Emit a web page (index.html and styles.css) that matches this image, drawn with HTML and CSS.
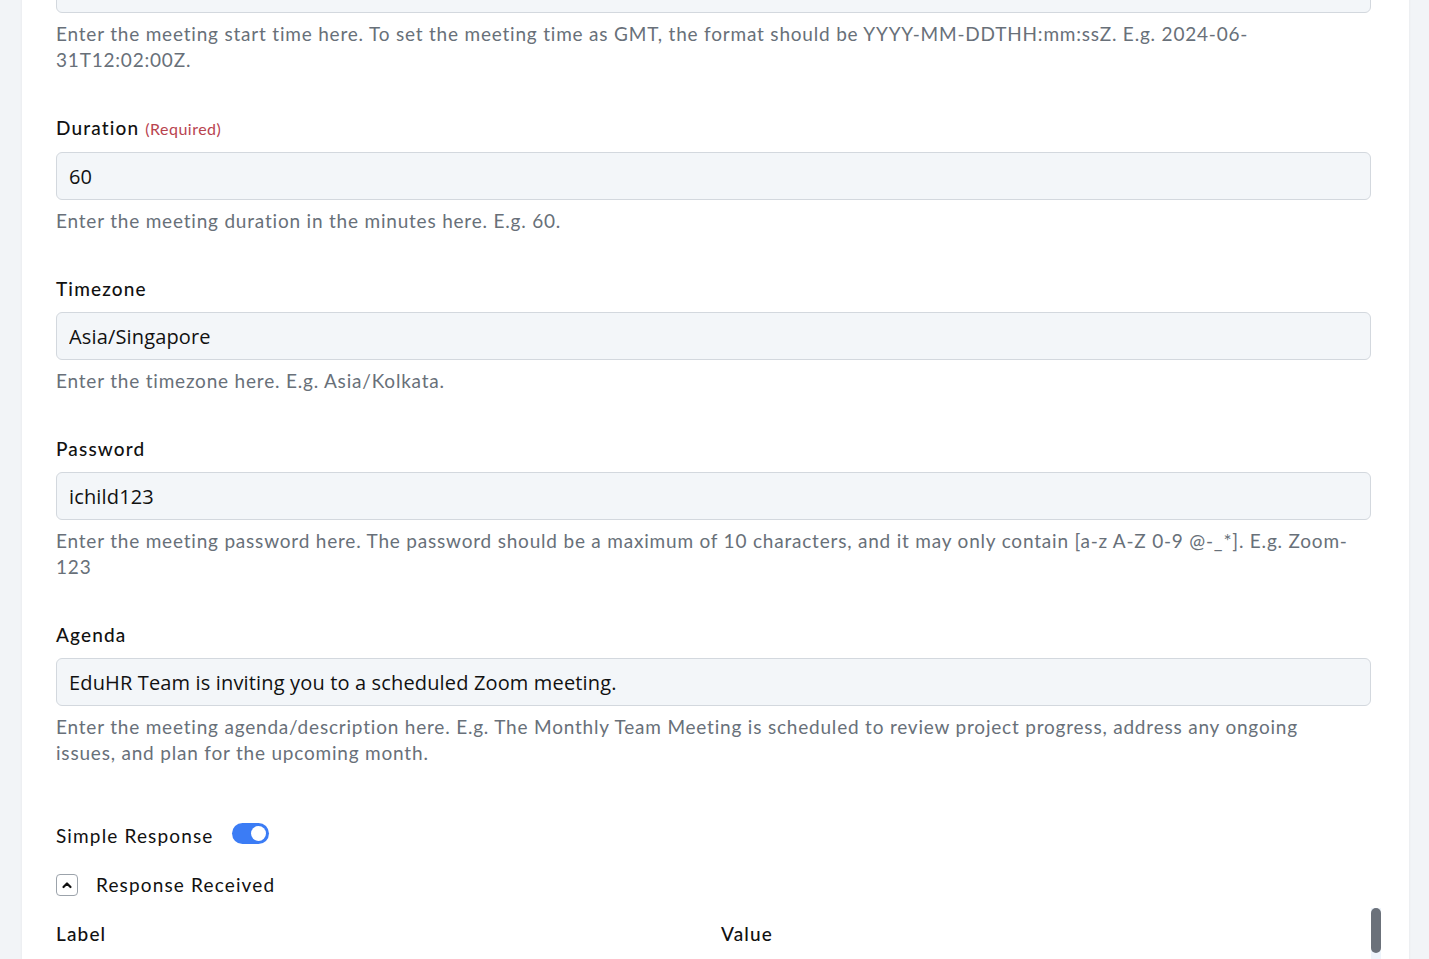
FILE: index.html
```html
<!DOCTYPE html>
<html lang="en">
<head>
  <meta charset="UTF-8">
  <meta name="viewport" content="width=device-width, initial-scale=1.0">
  <title>Zoom Meeting Settings</title>
  <link rel="stylesheet" href="styles.css">
</head>
<body>
  <div class="card">
    <div class="field first">
      <input class="text-input" type="text" value="2024-06-31T12:02:00">
      <p class="help">Enter the meeting start time here. To set the meeting time as GMT, the format should be YYYY-MM-DDTHH:mm:ssZ. E.g. 2024-06-31T12:02:00Z.</p>
    </div>

    <div class="field">
      <label class="label">Duration <span class="required">(Required)</span></label>
      <input class="text-input" type="text" value="60">
      <p class="help">Enter the meeting duration in the minutes here. E.g. 60.</p>
    </div>

    <div class="field">
      <label class="label">Timezone</label>
      <input class="text-input" type="text" value="Asia/Singapore">
      <p class="help">Enter the timezone here. E.g. Asia/Kolkata.</p>
    </div>

    <div class="field">
      <label class="label">Password</label>
      <input class="text-input" type="text" value="ichild123">
      <p class="help">Enter the meeting password here. The password should be a maximum of 10 characters, and it may only contain [a-z A-Z 0-9 @-_*]. E.g. Zoom-123</p>
    </div>

    <div class="field">
      <label class="label">Agenda</label>
      <input class="text-input" type="text" value="EduHR Team is inviting you to a scheduled Zoom meeting.">
      <p class="help">Enter the meeting agenda/description here. E.g. The Monthly Team Meeting is scheduled to review project progress, address any ongoing issues, and plan for the upcoming month.</p>
    </div>

    <div class="toggle-row">
      <span>Simple Response</span>
      <span class="switch"><span class="knob"></span></span>
    </div>

    <div class="collapse-row">
      <span class="collapse-btn">
        <svg width="12" height="12" viewBox="0 0 12 12"><path d="M2.5 8 L6 4.5 L9.5 8" fill="none" stroke="#111" stroke-width="2.2" stroke-linecap="round" stroke-linejoin="round"/></svg>
      </span>
      <span>Response Received</span>
    </div>

    <div class="table-wrap">
      <div class="table-head">
        <span>Label</span>
        <span>Value</span>
      </div>
      <div class="scroll-track"><div class="scroll-thumb"></div></div>
    </div>
  </div>
</body>
</html>
```

FILE: styles.css
```css
body {
  margin: 0;
  background: #f2f4f7;
  font-family: "Lato", sans-serif;
  color: #111;
  overflow: hidden;
  height: 959px;
}

.card {
  background: #fff;
  margin: -35px 20px 0 22px;
  padding: 0 38px 0 34px;
  box-shadow: 0 0 3px rgba(0, 0, 0, 0.06);
  height: 1040px;
}

.field {
  margin-bottom: 42px;
}

.label {
  display: block;
  font-size: 19px;
  line-height: 26px;
  font-weight: 500;
  letter-spacing: 1.15px;
  margin-bottom: 10px;
}

.required {
  font-size: 16px;
  color: #b8434f;
  font-weight: 400;
  letter-spacing: 0.5px;
}

.text-input {
  display: block;
  box-sizing: border-box;
  width: 100%;
  height: 48px;
  padding: 0 12px;
  background: #f3f6f9;
  border: 1px solid #d3d8de;
  border-radius: 6px;
  font-family: "Open Sans", sans-serif;
  font-size: 20px;
  letter-spacing: 0.15px;
  color: #111;
  outline: none;
}

.help {
  margin: 8px 0 0;
  padding-right: 16px;
  font-size: 19px;
  line-height: 26px;
  letter-spacing: 0.8px;
  color: #687079;
}

.toggle-row {
  display: flex;
  align-items: center;
  gap: 18px;
  font-size: 19px;
  letter-spacing: 1.15px;
  margin-top: 56px;
  height: 26px;
}

.switch {
  width: 37px;
  height: 21px;
  border-radius: 11px;
  background: #3b7cf5;
  position: relative;
  margin-top: -4px;
}

.knob {
  position: absolute;
  top: 3px;
  right: 3px;
  width: 15px;
  height: 15px;
  border-radius: 50%;
  background: #fff;
}

.collapse-row {
  display: flex;
  align-items: center;
  gap: 18px;
  font-size: 19px;
  letter-spacing: 1.15px;
  margin-top: 25px;
}

.collapse-btn {
  box-sizing: border-box;
  width: 22px;
  height: 22px;
  border: 1px solid #9ca3ab;
  border-radius: 4px;
  display: flex;
  align-items: center;
  justify-content: center;
}

.table-wrap {
  position: relative;
  margin-top: 25px;
}

.table-head {
  display: grid;
  grid-template-columns: 665px 1fr;
  font-size: 19px;
  font-weight: 500;
  letter-spacing: 1.15px;
  line-height: 26px;
}

.scroll-track {
  position: absolute;
  right: -10px;
  top: -13px;
  width: 10px;
  height: 80px;
  background: #eef4fb;
}

.scroll-thumb {
  width: 10px;
  height: 45px;
  border-radius: 5px;
  background: #6b717a;
}
```
